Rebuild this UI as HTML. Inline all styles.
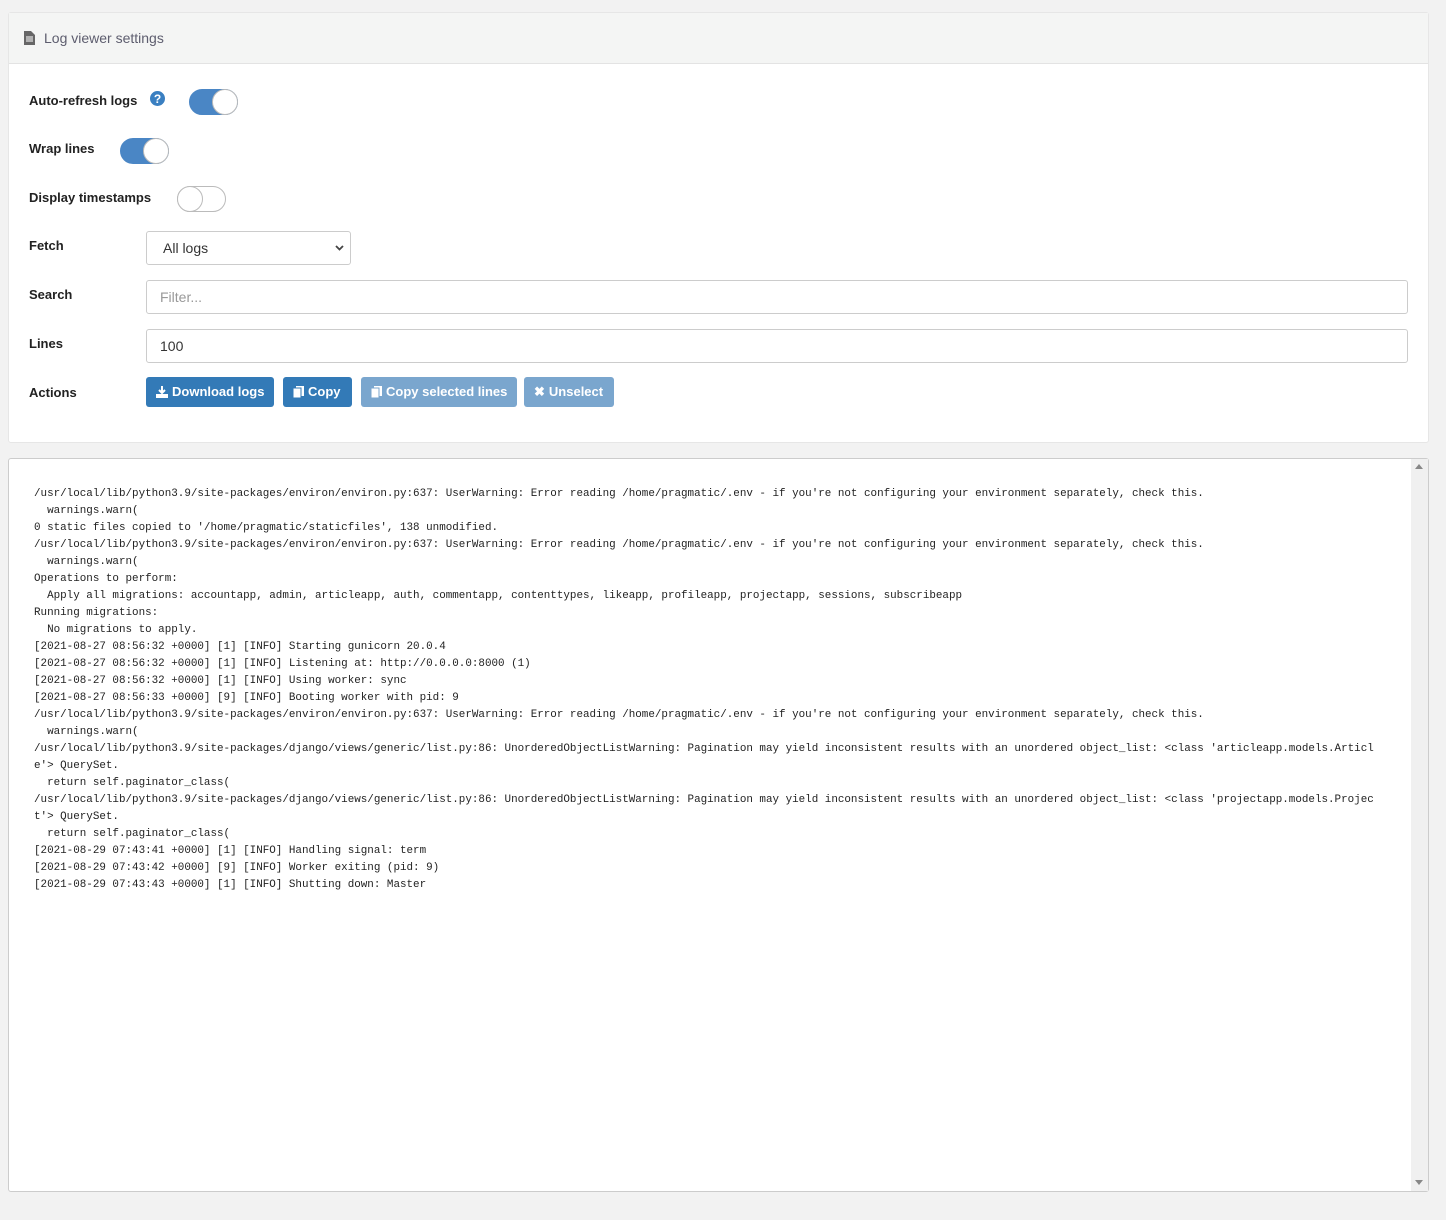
<!DOCTYPE html>
<html><head><meta charset="utf-8"><style>
*{box-sizing:border-box;margin:0;padding:0}
body{width:1446px;height:1220px;background:#f2f2f2;font-family:"Liberation Sans",sans-serif;position:relative;overflow:hidden}
.card1{position:absolute;left:8px;top:12px;width:1421px;height:431px;background:#fff;border:1px solid #e6e6e6;border-radius:3px}
.hdr{height:51px;background:#f4f5f4;border-bottom:1px solid #e3e3e3;display:flex;align-items:center;padding-left:15px;color:#5d5d6e;font-size:14px}
.hdr svg{margin-right:9px}
.lbl{position:absolute;left:20px;font-size:13px;font-weight:bold;color:#222}
.tog{position:absolute;width:49px;height:26px;border-radius:13px;border:1px solid #bbb;background:#fff}
.tog.on{background:#4a86c5;border-color:#4a86c5}
.tog .k{position:absolute;top:-1px;width:26px;height:26px;border-radius:50%;background:#fff;border:1px solid #bbb}
.tog.on .k{right:-1px}.tog.off .k{left:-1px}
.inp{position:absolute;left:137px;height:34px;border:1px solid #ccc;border-radius:3px;background:#fff;font-size:14px;padding-left:13px;line-height:32px;color:#333}
.btn{position:absolute;top:364px;height:30px;border-radius:3px;color:#fff;font-size:13px;font-weight:bold;line-height:30px;padding-left:10px;display:flex;align-items:center;gap:4px}
.card2{position:absolute;left:8px;top:458px;width:1421px;height:734px;background:#fff;border:1px solid #ccc;border-radius:3px}
.sb{position:absolute;right:0;top:0;width:17px;height:100%;background:#f0f0f0}
pre{position:absolute;left:25px;top:27px;font-family:"Liberation Mono",monospace;font-size:10.9px;line-height:17px;color:#222}
</style></head><body>
<div class="card1">
 <div class="hdr"><svg width="11" height="14" viewBox="0 0 11 14"><path d="M0 0h7l4 4v10H0z" fill="#666"/><path d="M2 6h7M2 8h7M2 10h7" stroke="#fff" stroke-width="1"/></svg>Log viewer settings</div>
 <div class="lbl" style="top:80px">Auto-refresh logs</div>
 <svg style="position:absolute;left:141px;top:78px" width="15" height="15"><circle cx="7.5" cy="7.5" r="7.5" fill="#3a7fc1"/><text x="7.5" y="12" fill="#fff" font-size="12" font-weight="bold" text-anchor="middle" font-family="Liberation Sans">?</text></svg>
 <div class="tog on" style="left:180px;top:76px"><div class="k"></div></div>
 <div class="lbl" style="top:128px">Wrap lines</div>
 <div class="tog on" style="left:111px;top:125px"><div class="k"></div></div>
 <div class="lbl" style="top:177px">Display timestamps</div>
 <div class="tog off" style="left:168px;top:173px"><div class="k"></div></div>
 <div class="lbl" style="top:225px">Fetch</div>
 <div class="inp" style="top:218px;width:205px;padding-left:16px">All logs<svg style="position:absolute;right:6px;top:13px" width="9" height="6"><path d="M1 1l3.5 3.5L8 1" stroke="#444" stroke-width="1.8" fill="none"/></svg></div>
 <div class="lbl" style="top:274px">Search</div>
 <div class="inp" style="top:267px;width:1262px;color:#999">Filter...</div>
 <div class="lbl" style="top:323px">Lines</div>
 <div class="inp" style="top:316px;width:1262px">100</div>
 <div class="lbl" style="top:372px">Actions</div>
 <div class="btn" style="left:137px;width:128px;background:#337ab7"><svg width="12" height="12"><path d="M6 0v7M3 4l3 3 3-3" stroke="#fff" stroke-width="2" fill="none"/><path d="M0 8v4h12V8" fill="#fff"/></svg>Download logs</div>
 <div class="btn" style="left:274px;width:69px;background:#337ab7"><svg width="11" height="12"><rect x="3" y="0" width="8" height="10" fill="#fff"/><rect x="0" y="2" width="8" height="10" fill="#fff" stroke="#337ab7"/></svg>Copy</div>
 <div class="btn" style="left:352px;width:156px;background:#7aa6ce"><svg width="11" height="12"><rect x="3" y="0" width="8" height="10" fill="#fff"/><rect x="0" y="2" width="8" height="10" fill="#fff" stroke="#7aa6ce"/></svg>Copy selected lines</div>
 <div class="btn" style="left:515px;width:90px;background:#7aa6ce"><span style="font-size:13px">✖</span>Unselect</div>
</div>
<div class="card2">
 <div class="sb"><svg style="position:absolute;left:4px;top:5px" width="8" height="5"><path d="M0 5L4 0l4 5z" fill="#888"/></svg><svg style="position:absolute;left:4px;bottom:6px" width="8" height="5"><path d="M0 0l4 5 4-5z" fill="#888"/></svg></div>
<pre>/usr/local/lib/python3.9/site-packages/environ/environ.py:637: UserWarning: Error reading /home/pragmatic/.env - if you're not configuring your environment separately, check this.
  warnings.warn(
0 static files copied to '/home/pragmatic/staticfiles', 138 unmodified.
/usr/local/lib/python3.9/site-packages/environ/environ.py:637: UserWarning: Error reading /home/pragmatic/.env - if you're not configuring your environment separately, check this.
  warnings.warn(
Operations to perform:
  Apply all migrations: accountapp, admin, articleapp, auth, commentapp, contenttypes, likeapp, profileapp, projectapp, sessions, subscribeapp
Running migrations:
  No migrations to apply.
[2021-08-27 08:56:32 +0000] [1] [INFO] Starting gunicorn 20.0.4
[2021-08-27 08:56:32 +0000] [1] [INFO] Listening at: http://0.0.0.0:8000 (1)
[2021-08-27 08:56:32 +0000] [1] [INFO] Using worker: sync
[2021-08-27 08:56:33 +0000] [9] [INFO] Booting worker with pid: 9
/usr/local/lib/python3.9/site-packages/environ/environ.py:637: UserWarning: Error reading /home/pragmatic/.env - if you're not configuring your environment separately, check this.
  warnings.warn(
/usr/local/lib/python3.9/site-packages/django/views/generic/list.py:86: UnorderedObjectListWarning: Pagination may yield inconsistent results with an unordered object_list: &lt;class 'articleapp.models.Articl
e'&gt; QuerySet.
  return self.paginator_class(
/usr/local/lib/python3.9/site-packages/django/views/generic/list.py:86: UnorderedObjectListWarning: Pagination may yield inconsistent results with an unordered object_list: &lt;class 'projectapp.models.Projec
t'&gt; QuerySet.
  return self.paginator_class(
[2021-08-29 07:43:41 +0000] [1] [INFO] Handling signal: term
[2021-08-29 07:43:42 +0000] [9] [INFO] Worker exiting (pid: 9)
[2021-08-29 07:43:43 +0000] [1] [INFO] Shutting down: Master</pre>
</div>
</body></html>
